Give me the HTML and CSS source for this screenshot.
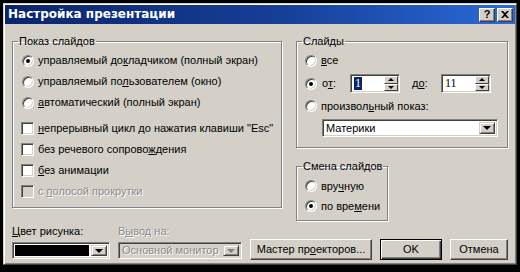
FILE: index.html
```html
<!DOCTYPE html>
<html lang="ru">
<head>
  <meta charset="UTF-8">
  <title>Настройка презентации</title>
  <link rel="stylesheet" href="styles.css">
</head>
<body>
  <div class="screen">
    <div class="dialog">
      <div class="titlebar">
        <span class="title">Настройка презентации</span>
        <div class="caption-btns">
          <span class="cbtn">?</span>
          <span class="cbtn">
            <svg width="8" height="7" viewBox="0 0 8 7"><path d="M0 0h2l2 2 2-2h2L5 3.5 8 7H6L4 5 2 7H0l3-3.5z" fill="#000"/></svg>
          </span>
        </div>
      </div>

      <div class="content">
        <div class="top">
          <fieldset class="group group-show">
            <legend>Показ слайдов</legend>
            <div class="group-body">
              <div class="opt"><span class="radio on"></span><span>управляемый до<u>к</u>ладчиком (полный экран)</span></div>
              <div class="opt"><span class="radio"></span><span>управляемый по<u>л</u>ьзователем (окно)</span></div>
              <div class="opt"><span class="radio"></span><span><u>а</u>втоматический (полный экран)</span></div>
              <div class="checks">
                <div class="opt"><span class="check"></span><span><u>н</u>епрерывный цикл до нажатия клавиши "Esc"</span></div>
                <div class="opt"><span class="check"></span><span>без речевого сопрово<u>ж</u>дения</span></div>
                <div class="opt"><span class="check"></span><span><u>б</u>ез анимации</span></div>
                <div class="opt off"><span class="check"></span><span>с <u>п</u>олосой прокрутки</span></div>
              </div>
            </div>
          </fieldset>

          <div class="right-col">
            <fieldset class="group group-slides">
              <legend>Слайды</legend>
              <div class="group-body">
                <div class="opt"><span class="radio"></span><span><u>в</u>се</span></div>
                <div class="opt range">
                  <span class="radio on"></span><span class="range-label">о<u>т</u>:</span>
                  <div class="spin">
                    <div class="spin-field"><span class="sel">1</span></div>
                    <div class="spin-btns"><span class="sb"><i class="tri-up"></i></span><span class="sb"><i class="tri-down"></i></span></div>
                  </div>
                  <span class="range-label to">д<u>о</u>:</span>
                  <div class="spin">
                    <div class="spin-field"><span>11</span></div>
                    <div class="spin-btns"><span class="sb"><i class="tri-up"></i></span><span class="sb"><i class="tri-down"></i></span></div>
                  </div>
                </div>
                <div class="opt short"><span class="radio"></span><span>произвол<u>ь</u>ный показ:</span></div>
                <div class="combo show-combo">
                  <span class="val">Материки</span>
                  <span class="drop"><i class="tri-down big"></i></span>
                </div>
              </div>
            </fieldset>

            <fieldset class="group group-change">
              <legend>Смена слайдов</legend>
              <div class="group-body">
                <div class="opt"><span class="radio"></span><span>вру<u>ч</u>ную</span></div>
                <div class="opt"><span class="radio on"></span><span>по вре<u>м</u>ени</span></div>
              </div>
            </fieldset>
          </div>
        </div>

        <div class="bottom">
          <div class="field">
            <div class="label"><u>Ц</u>вет рисунка:</div>
            <div class="combo color-combo">
              <span class="swatch"></span>
              <span class="drop"><i class="tri-down big"></i></span>
            </div>
          </div>
          <div class="field off">
            <div class="label">В<u>ы</u>вод на:</div>
            <div class="combo monitor-combo">
              <span class="val">Основной монитор</span>
              <span class="drop"><i class="tri-down big"></i></span>
            </div>
          </div>
          <button class="btn wizard">Мастер пр<u>о</u>екторов...</button>
          <button class="btn default">OK</button>
          <button class="btn cancel">Отмена</button>
        </div>
      </div>
    </div>
  </div>
</body>
</html>
```

FILE: styles.css
```css
body {
  margin: 0;
  font-family: "Liberation Sans", Arial, sans-serif;
  font-size: 11px;
  line-height: 13px;
  color: #000;
}
.screen {
  width: 520px;
  height: 272px;
  box-sizing: border-box;
  padding: 3px 3px 7px;
  background: #000;
}
.dialog {
  height: 100%;
  box-sizing: border-box;
  padding: 1px;
  background: #d4d0c8;
  border: 1px solid;
  border-color: #d4d0c8 #404040 #404040 #d4d0c8;
  box-shadow: inset 1px 1px #fff, inset -1px -1px #808080;
  display: flex;
  flex-direction: column;
}

/* title bar */
.titlebar {
  height: 19px;
  display: flex;
  align-items: center;
  justify-content: space-between;
  padding: 0 2px 0 3px;
  background: linear-gradient(90deg, #0a246a 0%, #163f98 55%, #2a6ad8 100%);
}
.title {
  color: #fff;
  font-family: "DejaVu Sans", sans-serif;
  font-weight: bold;
  font-size: 12px;
}
.caption-btns {
  display: flex;
  gap: 2px;
}
.cbtn {
  width: 16px;
  height: 14px;
  box-sizing: border-box;
  display: flex;
  align-items: center;
  justify-content: center;
  background: #d4d0c8;
  border: 1px solid;
  border-color: #fff #404040 #404040 #fff;
  box-shadow: inset -1px -1px #808080;
  font-weight: bold;
  font-size: 11px;
}

/* content */
.content {
  flex: 1;
  display: flex;
  flex-direction: column;
  padding: 11px 7px 3px;
}
.top {
  display: grid;
  grid-template-columns: 270px 212px;
  column-gap: 14px;
  align-items: start;
}
.right-col {
  display: flex;
  flex-direction: column;
  align-items: flex-start;
  gap: 12px;
}
.group {
  margin: 0;
  padding: 0;
  min-width: 0;
  border: 1px solid #808080;
  box-shadow: inset 1px 1px #fff, 1px 1px #fff;
}
.group legend {
  margin-left: 5px;
  padding: 0 1px;
  line-height: 13px;
}
.group-show .group-body {
  padding: 2px 0 5px 9px;
}
.group-slides {
  width: 212px;
  box-sizing: border-box;
}
.group-slides .group-body {
  padding: 2px 0 10px 8px;
}
.group-change {
  width: 92px;
  box-sizing: border-box;
}
.group-change .group-body {
  padding: 3px 0 4px 8px;
}
.group-change .opt {
  height: 20px;
}

/* radio / check rows */
.opt {
  height: 21px;
  display: flex;
  align-items: center;
  gap: 4px;
  white-space: nowrap;
}
.opt u, .label u, .btn u {
  text-underline-offset: 1px;
}
.checks {
  margin-top: 5px;
}
.checks .opt {
  margin-left: -1px;
}
.radio {
  position: relative;
  width: 12px;
  height: 12px;
  box-sizing: border-box;
  flex: none;
  border-radius: 50%;
  border: 1px solid;
  border-color: #808080 #fff #fff #808080;
  background: #fff;
  box-shadow: inset 1px 1px #404040, inset -1px -1px #d4d0c8;
}
.radio.on::after {
  content: "";
  position: absolute;
  left: 3px;
  top: 3px;
  width: 4px;
  height: 4px;
  border-radius: 50%;
  background: #000;
}
.check {
  width: 13px;
  height: 13px;
  box-sizing: border-box;
  flex: none;
  border: 1px solid;
  border-color: #808080 #fff #fff #808080;
  background: #fff;
  box-shadow: inset 1px 1px #404040, inset -1px -1px #d4d0c8;
}
.off {
  color: #8a8a8a;
  text-shadow: 1px 1px #fff;
}
.opt.off .check {
  background: #d4d0c8;
}

/* range row */
.range {
  height: 25px;
}
.short {
  height: 20px;
}
.range-label {
  width: 24px;
  margin-left: 1px;
}
.range-label.to {
  width: 25px;
  margin-left: 8px;
}
.spin {
  width: 50px;
  height: 19px;
  box-sizing: border-box;
  display: flex;
  background: #fff;
  border: 1px solid;
  border-color: #808080 #fff #fff #808080;
  box-shadow: inset 1px 1px #404040, inset -1px -1px #d4d0c8;
  padding: 2px 2px 2px 3px;
}
.spin-field {
  flex: 1;
  display: flex;
  align-items: center;
  font-family: "Liberation Serif", serif;
  font-size: 12px;
}
.sel {
  background: #0a246a;
  color: #fff;
  padding: 0 1px;
}
.spin-btns {
  width: 14px;
  margin: -1px -1px -1px 0;
  display: flex;
  flex-direction: column;
}
.sb {
  flex: 1;
  display: flex;
  align-items: center;
  justify-content: center;
  background: #d4d0c8;
  border: 1px solid;
  border-color: #fff #404040 #404040 #fff;
}
.tri-up, .tri-down {
  width: 0;
  height: 0;
  border-left: 3px solid transparent;
  border-right: 3px solid transparent;
}
.tri-up {
  border-bottom: 3px solid #000;
}
.tri-down {
  border-top: 3px solid #000;
}
.tri-down.big {
  border-left-width: 4px;
  border-right-width: 4px;
  border-top-width: 4px;
}

/* combos */
.combo {
  height: 18px;
  box-sizing: border-box;
  display: flex;
  align-items: stretch;
  background: #fff;
  border: 1px solid;
  border-color: #808080 #fff #fff #808080;
  box-shadow: inset 1px 1px #404040, inset -1px -1px #d4d0c8;
  padding: 2px;
}
.combo .val {
  flex: 1;
  display: flex;
  align-items: center;
  padding-left: 1px;
}
.combo .drop {
  width: 16px;
  box-sizing: border-box;
  display: flex;
  align-items: center;
  justify-content: center;
  background: #d4d0c8;
  border: 1px solid;
  border-color: #d4d0c8 #404040 #404040 #d4d0c8;
  box-shadow: inset 1px 1px #fff, inset -1px -1px #808080;
}
.show-combo {
  width: 176px;
  margin: 3px 0 0 17px;
}

/* bottom row */
.bottom {
  margin-top: auto;
  display: flex;
  align-items: flex-end;
  gap: 8px;
}
.field .label {
  height: 14px;
  margin-bottom: 3px;
}
.field .combo {
  height: 17px;
  margin-bottom: 1px;
}
.color-combo {
  width: 98px;
}
.swatch {
  flex: 1;
  background: #000;
  margin-right: 2px;
}
.monitor-combo {
  width: 124px;
  background: #d4d0c8;
}
.field.off .tri-down {
  border-top-color: #808080;
}
.btn {
  height: 21px;
  box-sizing: border-box;
  padding: 0;
  font: inherit;
  color: #000;
  background: #d4d0c8;
  border: 1px solid;
  border-color: #fff #404040 #404040 #fff;
  box-shadow: inset -1px -1px #808080;
}
.wizard {
  width: 122px;
}
.default {
  width: 62px;
  border: 1px solid #000;
  box-shadow: inset 1px 1px #fff, inset -1px -1px #404040, inset -2px -2px #808080;
}
.cancel {
  width: 58px;
}
```
